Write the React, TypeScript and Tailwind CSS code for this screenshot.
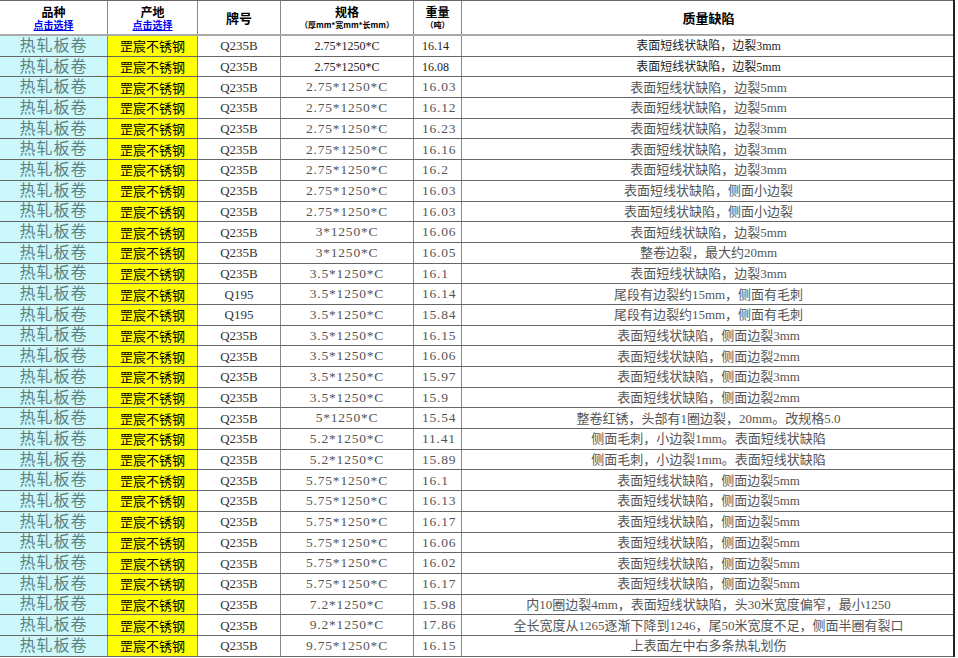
const rows: [string, string, string, string][] = [
  ["Q235B","2.75*1250*C","16.14","表面短线状缺陷，边裂3mm"],
  ["Q235B","2.75*1250*C","16.08","表面短线状缺陷，边裂5mm"],
  ["Q235B","2.75*1250*C","16.03","表面短线状缺陷，边裂5mm"],
  ["Q235B","2.75*1250*C","16.12","表面短线状缺陷，边裂5mm"],
  ["Q235B","2.75*1250*C","16.23","表面短线状缺陷，边裂3mm"],
  ["Q235B","2.75*1250*C","16.16","表面短线状缺陷，边裂3mm"],
  ["Q235B","2.75*1250*C","16.2","表面短线状缺陷，边裂3mm"],
  ["Q235B","2.75*1250*C","16.03","表面短线状缺陷，侧面小边裂"],
  ["Q235B","2.75*1250*C","16.03","表面短线状缺陷，侧面小边裂"],
  ["Q235B","3*1250*C","16.06","表面短线状缺陷，边裂5mm"],
  ["Q235B","3*1250*C","16.05","整卷边裂，最大约20mm"],
  ["Q235B","3.5*1250*C","16.1","表面短线状缺陷，边裂3mm"],
  ["Q195","3.5*1250*C","16.14","尾段有边裂约15mm，侧面有毛刺"],
  ["Q195","3.5*1250*C","15.84","尾段有边裂约15mm，侧面有毛刺"],
  ["Q235B","3.5*1250*C","16.15","表面短线状缺陷，侧面边裂3mm"],
  ["Q235B","3.5*1250*C","16.06","表面短线状缺陷，侧面边裂2mm"],
  ["Q235B","3.5*1250*C","15.97","表面短线状缺陷，侧面边裂3mm"],
  ["Q235B","3.5*1250*C","15.9","表面短线状缺陷，侧面边裂2mm"],
  ["Q235B","5*1250*C","15.54","整卷红锈，头部有1圈边裂，20mm。改规格5.0"],
  ["Q235B","5.2*1250*C","11.41","侧面毛刺，小边裂1mm。表面短线状缺陷"],
  ["Q235B","5.2*1250*C","15.89","侧面毛刺，小边裂1mm。表面短线状缺陷"],
  ["Q235B","5.75*1250*C","16.1","表面短线状缺陷，侧面边裂5mm"],
  ["Q235B","5.75*1250*C","16.13","表面短线状缺陷，侧面边裂5mm"],
  ["Q235B","5.75*1250*C","16.17","表面短线状缺陷，侧面边裂5mm"],
  ["Q235B","5.75*1250*C","16.06","表面短线状缺陷，侧面边裂5mm"],
  ["Q235B","5.75*1250*C","16.02","表面短线状缺陷，侧面边裂5mm"],
  ["Q235B","5.75*1250*C","16.17","表面短线状缺陷，侧面边裂5mm"],
  ["Q235B","7.2*1250*C","15.98","内10圈边裂4mm，表面短线状缺陷，头30米宽度偏窄，最小1250"],
  ["Q235B","9.2*1250*C","17.86","全长宽度从1265逐渐下降到1246，尾50米宽度不足，侧面半圈有裂口"],
  ["Q235B","9.75*1250*C","16.15","上表面左中右多条热轧划伤"],
];

const cols = "grid-cols-[108px_90px_83px_133px_48px_493px]";
const serif = { fontFamily: '"Liberation Serif","Noto Sans CJK SC",serif' };
const sans = { fontFamily: '"Noto Sans CJK SC",sans-serif' };

export default function App() {
  return (
    <div className="w-[958px] h-[658px] overflow-hidden bg-white" style={serif}>
      <div className="w-[955px] border-r-2 border-[#222]">
        <div className={`grid ${cols} h-[36px] border-b-2 border-[#aaa] border-t border-t-[#666]`} style={sans}>
          <div className="flex flex-col items-center justify-center border-r border-[#888]">
            <span className="text-[12px] leading-[14px] font-bold text-black">品种</span>
            <span className="text-[10px] leading-[12px] font-bold text-[#0000ee] underline">点击选择</span>
          </div>
          <div className="flex flex-col items-center justify-center border-r border-[#888]">
            <span className="text-[12px] leading-[14px] font-bold text-black">产地</span>
            <span className="text-[10px] leading-[12px] font-bold text-[#0000ee] underline">点击选择</span>
          </div>
          <div className="flex items-center justify-center border-r border-[#888] text-[13px] font-bold">牌号</div>
          <div className="flex flex-col items-center justify-center border-r border-[#888]">
            <span className="text-[12px] leading-[14px] font-bold">规格</span>
            <span className="text-[8px] leading-[11px] font-bold">（厚mm*宽mm*长mm）</span>
          </div>
          <div className="flex flex-col items-center justify-center border-r border-[#888]">
            <span className="text-[12px] leading-[14px] font-bold">重量</span>
            <span className="text-[8px] leading-[11px] font-bold">（吨）</span>
          </div>
          <div className="flex items-center justify-center text-[13px] font-bold">质量缺陷</div>
        </div>
        {rows.map((r, i) => {
          const early = i < 2;
          const txt = early ? "text-[12px] text-[#222]" : "text-[13.5px] text-[#555] tracking-[0.8px]";
          return (
            <div key={i} className={`grid ${cols} h-[20.7px] border-b border-[#666] leading-none`}>
              <div className="bg-[#ccf8fb] border-r border-[#888] flex items-center justify-center text-[16px] text-[#5b8080] tracking-[1px]">热轧板卷</div>
              <div className="bg-[#ffff00] border-r border-[#888] flex items-center justify-center text-[13px] text-black" style={sans}>罡宸不锈钢</div>
              <div className="border-r border-[#888] flex items-center justify-center text-[13px] text-[#333]">{r[0]}</div>
              <div className={`border-r border-[#888] flex items-center justify-center ${txt}`}>{r[1]}</div>
              <div className={`border-r border-[#888] flex items-center pl-[8px] ${txt}`}>{r[2]}</div>
              <div className={`flex items-center justify-center ${early ? "text-[12px] text-[#222]" : "text-[13px] text-[#555]"}`}>{r[3]}</div>
            </div>
          );
        })}
      </div>
    </div>
  );
}
